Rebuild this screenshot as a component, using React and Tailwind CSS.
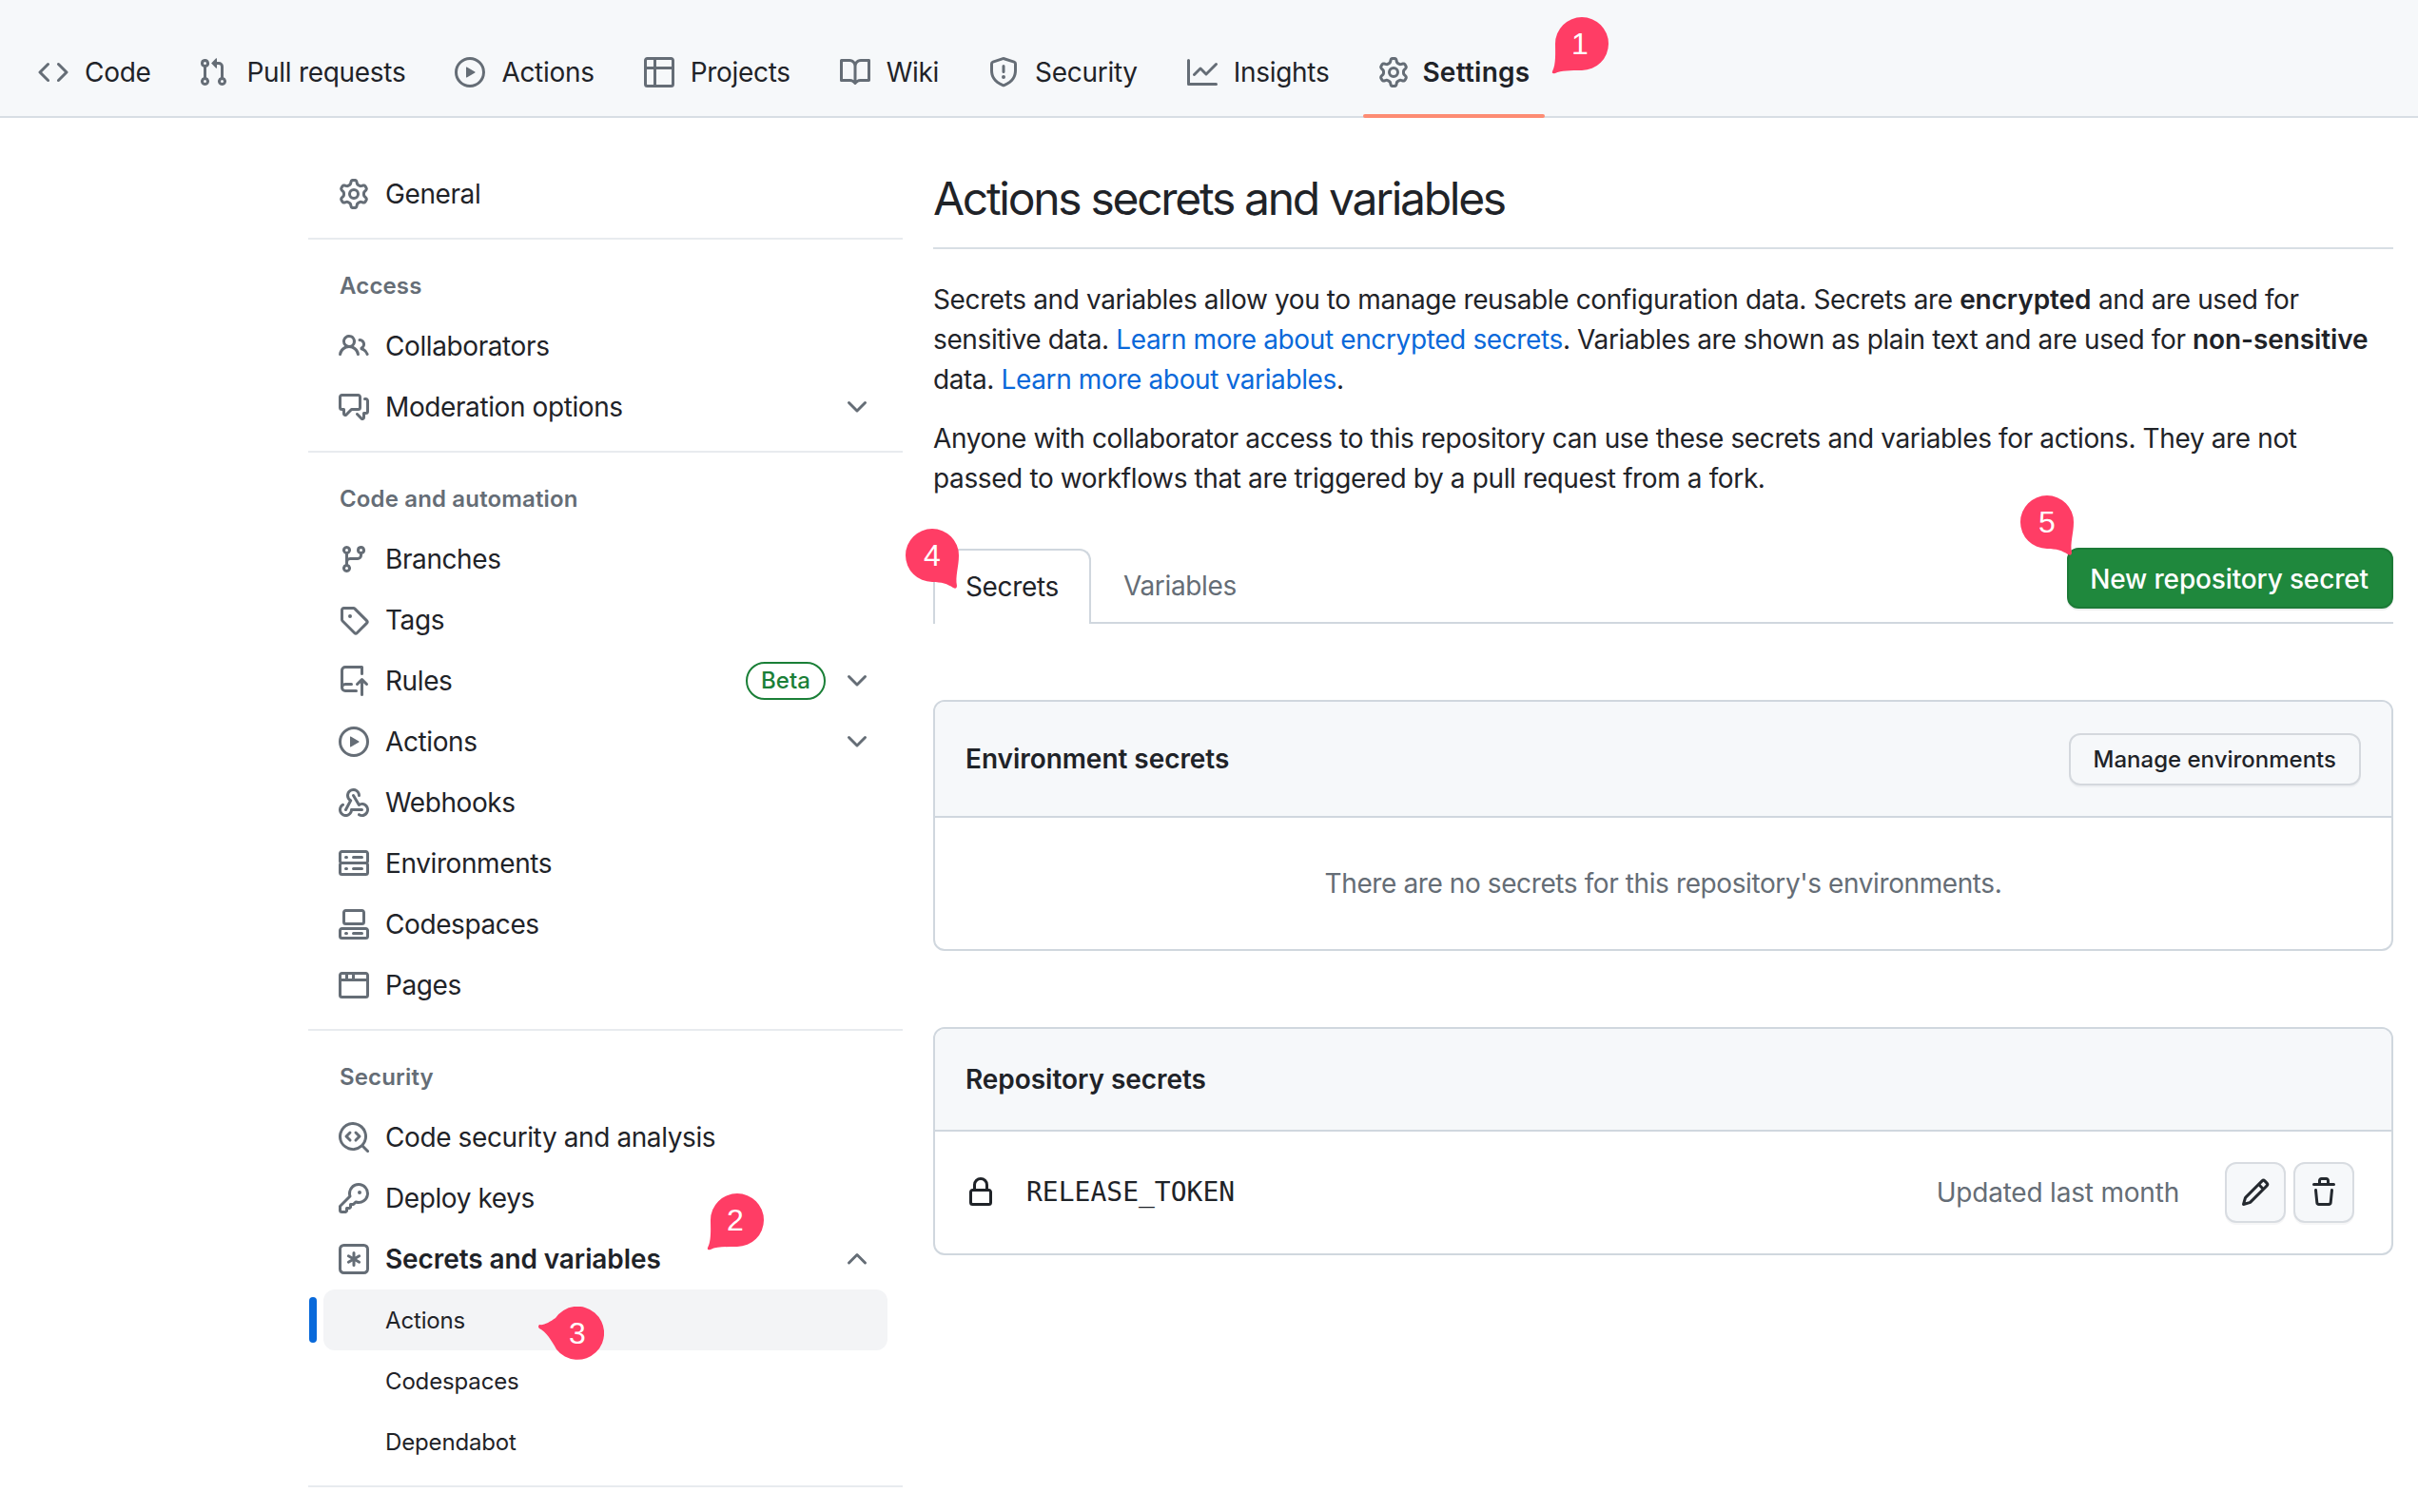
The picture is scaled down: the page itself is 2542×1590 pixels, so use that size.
const ICONS = {
  code: ['m11.28 3.22 4.25 4.25a.75.75 0 0 1 0 1.06l-4.25 4.25a.749.749 0 0 1-1.275-.326.749.749 0 0 1 .215-.734L13.94 8l-3.72-3.72a.749.749 0 0 1 .326-1.275.749.749 0 0 1 .734.215Zm-6.56 0a.751.751 0 0 1 1.042.018.751.751 0 0 1 .018 1.042L2.06 8l3.72 3.72a.749.749 0 0 1-.326 1.275.749.749 0 0 1-.734-.215L.47 8.53a.75.75 0 0 1 0-1.06Z'],
  pull: ['M1.5 3.25a2.25 2.25 0 1 1 3 2.122v5.256a2.251 2.251 0 1 1-1.5 0V5.372A2.25 2.25 0 0 1 1.5 3.25Zm5.677-.177L9.573.677A.25.25 0 0 1 10 .854V2.5h1A2.5 2.5 0 0 1 13.5 5v5.628a2.251 2.251 0 1 1-1.5 0V5a1 1 0 0 0-1-1h-1v1.646a.25.25 0 0 1-.427.177L7.177 3.427a.25.25 0 0 1 0-.354ZM3.75 2.5a.75.75 0 1 0 0 1.5.75.75 0 0 0 0-1.5Zm0 9.5a.75.75 0 1 0 0 1.5.75.75 0 0 0 0-1.5Zm8.25.75a.75.75 0 1 0 1.5 0 .75.75 0 0 0-1.5 0Z'],
  play: ['M8 0a8 8 0 1 1 0 16A8 8 0 0 1 8 0ZM1.5 8a6.5 6.5 0 1 0 13 0 6.5 6.5 0 0 0-13 0Zm4.879-2.773 4.264 2.559a.25.25 0 0 1 0 .428l-4.264 2.559A.25.25 0 0 1 6 10.559V5.442a.25.25 0 0 1 .379-.215Z'],
  table: ['M0 1.75C0 .784.784 0 1.75 0h12.5C15.216 0 16 .784 16 1.75v12.5A1.75 1.75 0 0 1 14.25 16H1.75A1.75 1.75 0 0 1 0 14.25ZM6.5 6.5v8h7.75a.25.25 0 0 0 .25-.25V6.5Zm8-1.5V1.75a.25.25 0 0 0-.25-.25H6.5V5Zm-13 1.5v7.75c0 .138.112.25.25.25H5v-8ZM5 5V1.5H1.75a.25.25 0 0 0-.25.25V5Z'],
  book: ['M0 1.75A.75.75 0 0 1 .75 1h4.253c1.227 0 2.317.59 3 1.501A3.743 3.743 0 0 1 11.006 1h4.245a.75.75 0 0 1 .75.75v10.5a.75.75 0 0 1-.75.75h-4.507a2.25 2.25 0 0 0-1.591.659l-.622.621a.75.75 0 0 1-1.06 0l-.622-.621A2.25 2.25 0 0 0 5.258 13H.75a.75.75 0 0 1-.75-.75Zm7.251 10.324.004-5.073-.002-2.253A2.25 2.25 0 0 0 5.003 2.5H1.5v9h3.757a3.75 3.75 0 0 1 1.994.574ZM8.755 4.75l-.004 7.322a3.752 3.752 0 0 1 1.992-.572H14.5v-9h-3.495a2.25 2.25 0 0 0-2.25 2.25Z'],
  shield: ['M7.467.133a1.748 1.748 0 0 1 1.066 0l5.25 1.68A1.75 1.75 0 0 1 15 3.48V7c0 1.566-.32 3.182-1.303 4.682-.983 1.498-2.585 2.813-5.032 3.855a1.697 1.697 0 0 1-1.33 0c-2.447-1.042-4.049-2.357-5.032-3.855C1.32 10.182 1 8.566 1 7V3.48a1.75 1.75 0 0 1 1.217-1.667Zm.61 1.429a.25.25 0 0 0-.153 0l-5.25 1.68a.25.25 0 0 0-.174.238V7c0 1.358.275 2.666 1.057 3.86.784 1.194 2.121 2.34 4.366 3.297a.196.196 0 0 0 .154 0c2.245-.956 3.582-2.104 4.366-3.298C13.225 9.666 13.5 8.36 13.5 7V3.48a.251.251 0 0 0-.174-.237l-5.25-1.68ZM8.75 4.75v3a.75.75 0 0 1-1.5 0v-3a.75.75 0 0 1 1.5 0ZM9 10.5a1 1 0 1 1-2 0 1 1 0 0 1 2 0Z'],
  graph: ['M1.5 1.75V13.5h13.75a.75.75 0 0 1 0 1.5H.75a.75.75 0 0 1-.75-.75V1.75a.75.75 0 0 1 1.5 0Zm14.28 2.53-5.25 5.25a.75.75 0 0 1-1.06 0L7 7.06 4.28 9.78a.751.751 0 0 1-1.042-.018.751.751 0 0 1-.018-1.042l3.25-3.25a.75.75 0 0 1 1.06 0L10 7.94l4.72-4.72a.751.751 0 0 1 1.042.018.751.751 0 0 1 .018 1.042Z'],
  gear: ['M8 0a8.2 8.2 0 0 1 .701.031C9.444.095 9.99.645 10.16 1.29l.288 1.107c.018.066.079.158.212.224.231.114.454.243.668.386.123.082.233.09.299.071l1.103-.303c.644-.176 1.392.021 1.82.63.27.385.506.792.704 1.218.315.675.111 1.422-.364 1.891l-.814.806c-.049.048-.098.147-.088.294.016.257.016.515 0 .772-.01.147.038.246.088.294l.814.806c.475.469.679 1.216.364 1.891a7.977 7.977 0 0 1-.704 1.217c-.428.61-1.176.807-1.82.63l-1.102-.302c-.067-.019-.177-.011-.3.071a5.909 5.909 0 0 1-.668.386c-.133.066-.194.158-.211.224l-.29 1.106c-.168.646-.715 1.196-1.458 1.26a8.006 8.006 0 0 1-1.402 0c-.743-.064-1.289-.614-1.458-1.26l-.289-1.106c-.018-.066-.079-.158-.212-.224a5.738 5.738 0 0 1-.668-.386c-.123-.082-.233-.09-.299-.071l-1.103.303c-.644.176-1.392-.021-1.82-.63a8.12 8.12 0 0 1-.704-1.218c-.315-.675-.111-1.422.363-1.891l.815-.806c.05-.048.098-.147.088-.294a6.214 6.214 0 0 1 0-.772c.01-.147-.038-.246-.088-.294l-.815-.806C.635 6.045.431 5.298.746 4.623a7.92 7.92 0 0 1 .704-1.217c.428-.61 1.176-.807 1.82-.63l1.102.302c.067.019.177.011.3-.071.214-.143.437-.272.668-.386.133-.066.194-.158.211-.224l.29-1.106C6.009.645 6.556.095 7.299.03 7.53.01 7.764 0 8 0Zm-.571 1.525c-.036.003-.108.036-.137.146l-.289 1.105c-.147.561-.549.967-.998 1.189-.173.086-.34.183-.5.29-.417.278-.97.423-1.529.27l-1.103-.303c-.109-.03-.175.016-.195.045-.22.312-.412.644-.573.99-.014.031-.021.11.059.19l.815.806c.411.406.562.957.53 1.456a4.709 4.709 0 0 0 0 .582c.032.499-.119 1.05-.53 1.456l-.815.806c-.081.08-.073.159-.059.19.162.346.353.677.573.989.02.03.085.076.195.046l1.102-.303c.56-.153 1.113-.008 1.53.27.161.107.328.204.501.29.447.222.85.629.997 1.189l.289 1.105c.029.109.101.143.137.146a6.6 6.6 0 0 0 1.142 0c.036-.003.108-.036.137-.146l.289-1.105c.147-.561.549-.967.998-1.189.173-.086.34-.183.5-.29.417-.278.97-.423 1.529-.27l1.103.303c.109.029.175-.016.195-.045.22-.313.411-.644.573-.99.014-.031.021-.11-.059-.19l-.815-.806c-.411-.406-.562-.957-.53-1.456a4.709 4.709 0 0 0 0-.582c-.032-.499.119-1.05.53-1.456l.815-.806c.081-.08.073-.159.059-.19a6.464 6.464 0 0 0-.573-.989c-.02-.03-.085-.076-.195-.046l-1.102.303c-.56.153-1.113.008-1.53-.27a4.44 4.44 0 0 0-.501-.29c-.447-.222-.85-.629-.997-1.189l-.289-1.105c-.029-.11-.101-.143-.137-.146a6.6 6.6 0 0 0-1.142 0ZM11 8a3 3 0 1 1-6 0 3 3 0 0 1 6 0ZM9.5 8a1.5 1.5 0 1 0-3.001.001A1.5 1.5 0 0 0 9.5 8Z'],
  people: ['M2 5.5a3.5 3.5 0 1 1 5.898 2.549 5.508 5.508 0 0 1 3.034 4.084.75.75 0 1 1-1.482.235 4 4 0 0 0-7.9 0 .75.75 0 0 1-1.482-.236A5.507 5.507 0 0 1 3.102 8.05 3.493 3.493 0 0 1 2 5.5ZM11 4a3.001 3.001 0 0 1 2.22 5.018 5.01 5.01 0 0 1 2.56 3.012.749.749 0 0 1-.885.954.752.752 0 0 1-.549-.514 3.507 3.507 0 0 0-2.522-2.372.75.75 0 0 1-.574-.73v-.352a.75.75 0 0 1 .416-.672A1.5 1.5 0 0 0 11 5.5.75.75 0 0 1 11 4Zm-5.5-.5a2 2 0 1 0-.001 3.999A2 2 0 0 0 5.5 3.5Z'],
  discussion: ['M1.75 1h8.5c.966 0 1.75.784 1.75 1.75v5.5A1.75 1.75 0 0 1 10.25 10H7.061l-2.574 2.573A1.458 1.458 0 0 1 2 11.543V10h-.25A1.75 1.75 0 0 1 0 8.25v-5.5C0 1.784.784 1 1.75 1ZM1.5 2.75v5.5c0 .138.112.25.25.25h1a.75.75 0 0 1 .75.75v2.19l2.72-2.72a.749.749 0 0 1 .53-.22h3.5a.25.25 0 0 0 .25-.25v-5.5a.25.25 0 0 0-.25-.25h-8.5a.25.25 0 0 0-.25.25Zm13 2a.25.25 0 0 0-.25-.25h-.5a.75.75 0 0 1 0-1.5h.5c.966 0 1.75.784 1.75 1.75v5.5A1.75 1.75 0 0 1 14.25 12H14v1.543a1.458 1.458 0 0 1-2.487 1.03L9.22 12.28a.749.749 0 0 1 .326-1.275.749.749 0 0 1 .734.215l2.22 2.22v-2.19a.75.75 0 0 1 .75-.75h1a.25.25 0 0 0 .25-.25Z'],
  branch: ['M9.5 3.25a2.25 2.25 0 1 1 3 2.122V6A2.5 2.5 0 0 1 10 8.5H6a1 1 0 0 0-1 1v1.128a2.251 2.251 0 1 1-1.5 0V5.372a2.25 2.25 0 1 1 1.5 0v1.836A2.493 2.493 0 0 1 6 7h4a1 1 0 0 0 1-1v-.628A2.25 2.25 0 0 1 9.5 3.25Zm-6 0a.75.75 0 1 0 1.5 0 .75.75 0 0 0-1.5 0Zm8.25-.75a.75.75 0 1 0 0 1.5.75.75 0 0 0 0-1.5ZM4.25 12a.75.75 0 1 0 0 1.5.75.75 0 0 0 0-1.5Z'],
  tag: ['M1 7.775V2.75C1 1.784 1.784 1 2.75 1h5.025c.464 0 .91.184 1.238.513l6.25 6.25a1.75 1.75 0 0 1 0 2.474l-5.026 5.026a1.75 1.75 0 0 1-2.474 0l-6.25-6.25A1.752 1.752 0 0 1 1 7.775Zm1.5 0c0 .066.026.13.073.177l6.25 6.25a.25.25 0 0 0 .354 0l5.025-5.025a.25.25 0 0 0 0-.354l-6.25-6.25a.25.25 0 0 0-.177-.073H2.75a.25.25 0 0 0-.25.25ZM6 5a1 1 0 1 1 0 2 1 1 0 0 1 0-2Z'],
  repoPush: ['M1 2.5A2.5 2.5 0 0 1 3.5 0h8.75a.75.75 0 0 1 .75.75v3.5a.75.75 0 0 1-1.5 0V1.5h-8a1 1 0 0 0-1 1v6.708A2.493 2.493 0 0 1 3.5 9h3.25a.75.75 0 0 1 0 1.5H3.5a1 1 0 0 0 0 2h5.75a.75.75 0 0 1 0 1.5H3.5A2.5 2.5 0 0 1 1 11.5Zm13.23 7.79h-.001l-1.224-1.224v6.184a.75.75 0 0 1-1.5 0V9.066L10.28 10.29a.75.75 0 0 1-1.06-1.061l2.505-2.504a.75.75 0 0 1 1.06 0L15.29 9.23a.751.751 0 0 1-.018 1.042.751.751 0 0 1-1.042.018Z'],
  webhook: [
    'M5.5 4.25a2.25 2.25 0 0 1 4.5 0 .75.75 0 0 0 1.5 0 3.75 3.75 0 1 0-6.14 2.889l-2.272 4.258a.75.75 0 0 0 1.324.706L7 7.25a.75.75 0 0 0-.309-1.015A2.25 2.25 0 0 1 5.5 4.25Z',
    'M7.364 3.607a.75.75 0 0 1 1.03.257l2.608 4.349a3.75 3.75 0 1 1-.628 6.785.75.75 0 0 1 .752-1.299 2.25 2.25 0 1 0-.033-3.88.75.75 0 0 1-1.03-.256L7.107 4.636a.75.75 0 0 1 .257-1.03Z',
    'M2.9 8.776A.75.75 0 0 1 2.625 9.8 2.25 2.25 0 1 0 6 11.75a.75.75 0 0 1 .75-.751h5.5a.75.75 0 0 1 0 1.5H7.425a3.751 3.751 0 1 1-5.55-3.998.75.75 0 0 1 1.024.274Z',
  ],
  server: ['M1.75 1h12.5c.966 0 1.75.784 1.75 1.75v4c0 .372-.116.717-.314 1 .198.283.314.628.314 1v4a1.75 1.75 0 0 1-1.75 1.75H1.75A1.75 1.75 0 0 1 0 12.75v-4c0-.358.109-.707.314-1a1.739 1.739 0 0 1-.314-1v-4C0 1.784.784 1 1.75 1ZM1.5 2.75v4c0 .138.112.25.25.25h12.5a.25.25 0 0 0 .25-.25v-4a.25.25 0 0 0-.25-.25H1.75a.25.25 0 0 0-.25.25Zm.25 5.75a.25.25 0 0 0-.25.25v4c0 .138.112.25.25.25h12.5a.25.25 0 0 0 .25-.25v-4a.25.25 0 0 0-.25-.25ZM7 4.75A.75.75 0 0 1 7.75 4h4.5a.75.75 0 0 1 0 1.5h-4.5A.75.75 0 0 1 7 4.75ZM7.75 10h4.5a.75.75 0 0 1 0 1.5h-4.5a.75.75 0 0 1 0-1.5ZM3 4.75A.75.75 0 0 1 3.75 4h.5a.75.75 0 0 1 0 1.5h-.5A.75.75 0 0 1 3 4.75ZM3.75 10h.5a.75.75 0 0 1 0 1.5h-.5a.75.75 0 0 1 0-1.5Z'],
  codespaces: [
    'M0 11.25c0-.966.784-1.75 1.75-1.75h12.5c.966 0 1.75.784 1.75 1.75v3A1.75 1.75 0 0 1 14.25 16H1.75A1.75 1.75 0 0 1 0 14.25Zm2-9.5C2 .784 2.784 0 3.75 0h8.5C13.216 0 14 .784 14 1.75v5a1.75 1.75 0 0 1-1.75 1.75h-8.5A1.75 1.75 0 0 1 2 6.75Zm1.75-.25a.25.25 0 0 0-.25.25v5c0 .138.112.25.25.25h8.5a.25.25 0 0 0 .25-.25v-5a.25.25 0 0 0-.25-.25Zm-2 9.5a.25.25 0 0 0-.25.25v3c0 .138.112.25.25.25h12.5a.25.25 0 0 0 .25-.25v-3a.25.25 0 0 0-.25-.25Z',
    'M7 12.75a.75.75 0 0 1 .75-.75h4.5a.75.75 0 0 1 0 1.5h-4.5a.75.75 0 0 1-.75-.75Zm-4 0a.75.75 0 0 1 .75-.75h.5a.75.75 0 0 1 0 1.5h-.5a.75.75 0 0 1-.75-.75Z',
  ],
  browser: ['M0 2.75C0 1.784.784 1 1.75 1h12.5c.966 0 1.75.784 1.75 1.75v10.5A1.75 1.75 0 0 1 14.25 15H1.75A1.75 1.75 0 0 1 0 13.25ZM14.5 6h-13v7.25c0 .138.112.25.25.25h12.5a.25.25 0 0 0 .25-.25Zm-6-3.5v2h6V2.75a.25.25 0 0 0-.25-.25ZM5 2.5v2h2v-2Zm-3.25 0a.25.25 0 0 0-.25.25V4.5h2v-2Z'],
  codescan: [
    'M8.47 4.97a.75.75 0 0 0 0 1.06L9.94 7.5 8.47 8.97a.75.75 0 1 0 1.06 1.06l2-2a.75.75 0 0 0 0-1.06l-2-2a.75.75 0 0 0-1.06 0ZM6.53 6.03a.75.75 0 0 0-1.06-1.06l-2 2a.75.75 0 0 0 0 1.06l2 2a.75.75 0 1 0 1.06-1.06L5.06 7.5l1.47-1.47Z',
    'M12.246 13.307a7.501 7.501 0 1 1 1.06-1.06l2.474 2.473a.749.749 0 0 1-.326 1.275.749.749 0 0 1-.734-.215ZM1.5 7.5a6.002 6.002 0 0 0 3.608 5.504 6.002 6.002 0 0 0 6.486-1.117.748.748 0 0 1 .292-.293A6 6 0 1 0 1.5 7.5Z',
  ],
  key: ['M10.5 0a5.499 5.499 0 1 1-1.288 10.848l-.932.932a.749.749 0 0 1-.53.22H7v.75a.749.749 0 0 1-.22.53l-.5.5a.749.749 0 0 1-.53.22H5v.75a.749.749 0 0 1-.22.53l-.5.5a.749.749 0 0 1-.53.22h-2A1.75 1.75 0 0 1 0 14.25v-2c0-.199.079-.389.22-.53l4.932-4.932A5.5 5.5 0 0 1 10.5 0Zm-4 5.5c-.001.431.069.86.205 1.269a.75.75 0 0 1-.181.768L1.5 12.56v1.69c0 .138.112.25.25.25h1.69l.06-.06v-1.19a.75.75 0 0 1 .75-.75h1.19l.06-.06v-1.19a.75.75 0 0 1 .75-.75h1.19l1.023-1.025a.75.75 0 0 1 .768-.18A4 4 0 1 0 6.5 5.5ZM11 6a1 1 0 1 1 0-2 1 1 0 0 1 0 2Z'],
  asterisk: [
    'M0 2.75A2.75 2.75 0 0 1 2.75 0h10.5A2.75 2.75 0 0 1 16 2.75v10.5A2.75 2.75 0 0 1 13.25 16H2.75A2.75 2.75 0 0 1 0 13.25ZM2.75 1.5c-.69 0-1.25.56-1.25 1.25v10.5c0 .69.56 1.25 1.25 1.25h10.5c.69 0 1.25-.56 1.25-1.25V2.75c0-.69-.56-1.25-1.25-1.25Z',
    'M8 4a.75.75 0 0 1 .75.75V6.7l1.69-.975a.75.75 0 0 1 .75 1.3L9.5 8l1.69.976a.75.75 0 0 1-.75 1.298L8.75 9.3v1.951a.75.75 0 0 1-1.5 0V9.299l-1.69.975a.75.75 0 0 1-.75-1.298L6.5 8l-1.69-.975a.75.75 0 0 1 .75-1.3l1.69.976V4.75A.75.75 0 0 1 8 4Z',
  ],
  chevronDown: ['M12.78 5.22a.749.749 0 0 1 0 1.06l-4.25 4.25a.749.749 0 0 1-1.06 0L3.22 6.28a.749.749 0 1 1 1.06-1.06L8 8.939l3.72-3.719a.749.749 0 0 1 1.06 0Z'],
  chevronUp: ['M3.22 10.53a.749.749 0 0 1 0-1.06l4.25-4.25a.749.749 0 0 1 1.06 0l4.25 4.25a.749.749 0 1 1-1.06 1.06L8 6.811 4.28 10.53a.749.749 0 0 1-1.06 0Z'],
  lock: ['M4 4a4 4 0 0 1 8 0v2h.25c.966 0 1.75.784 1.75 1.75v5.5A1.75 1.75 0 0 1 12.25 15h-8.5A1.75 1.75 0 0 1 2 13.25v-5.5C2 6.784 2.784 6 3.75 6H4Zm8.25 3.5h-8.5a.25.25 0 0 0-.25.25v5.5c0 .138.112.25.25.25h8.5a.25.25 0 0 0 .25-.25v-5.5a.25.25 0 0 0-.25-.25ZM10.5 6V4a2.5 2.5 0 1 0-5 0v2Z'],
  pencil: ['M11.013 1.427a1.75 1.75 0 0 1 2.474 0l1.086 1.086a1.75 1.75 0 0 1 0 2.474l-8.61 8.61c-.21.21-.47.364-.756.445l-3.251.93a.75.75 0 0 1-.927-.928l.929-3.25c.081-.286.235-.547.445-.758l8.61-8.61Zm.176 4.823L9.75 4.81l-6.286 6.287a.253.253 0 0 0-.064.108l-.558 1.953 1.953-.558a.253.253 0 0 0 .108-.064Zm1.238-3.763a.25.25 0 0 0-.354 0L10.811 3.75l1.439 1.44 1.263-1.263a.25.25 0 0 0 0-.354Z'],
  trash: ['M11 1.75V3h2.25a.75.75 0 0 1 0 1.5H2.75a.75.75 0 0 1 0-1.5H5V1.75C5 .784 5.784 0 6.75 0h2.5C10.216 0 11 .784 11 1.75ZM4.496 6.675l.66 6.6a.25.25 0 0 0 .249.225h5.19a.25.25 0 0 0 .249-.225l.66-6.6a.75.75 0 0 1 1.492.149l-.66 6.6A1.748 1.748 0 0 1 10.595 15h-5.19a1.75 1.75 0 0 1-1.741-1.575l-.66-6.6a.75.75 0 1 1 1.492-.15ZM6.5 1.75V3h3V1.75a.25.25 0 0 0-.25-.25h-2.5a.25.25 0 0 0-.25.25Z'],
};

function Icon({ name, className = 'text-[#656d76]' }) {
  return (
    <svg viewBox="0 0 16 16" fill="currentColor" className={`h-8 w-8 shrink-0 ${className}`}>
      {ICONS[name].map((d) => (
        <path key={d} d={d} />
      ))}
    </svg>
  );
}

const TABS = [
  ['code', 'Code'],
  ['pull', 'Pull requests'],
  ['play', 'Actions'],
  ['table', 'Projects'],
  ['book', 'Wiki'],
  ['shield', 'Security'],
  ['graph', 'Insights'],
  ['gear', 'Settings'],
];

function TopNav() {
  return (
    <nav className="flex h-[124px] items-stretch gap-5 border-b-2 border-[#d8dee4] bg-[#f6f8fa] pl-6 tracking-[-0.3px]">
      {TABS.map(([icon, label]) => {
        const active = label === 'Settings';
        const pull = label === 'Pull requests';
        return (
          <a key={label} className={`relative flex items-center px-4 pt-[30px] ${active ? 'gap-[14px]' : pull ? '-ml-[3px] gap-5' : 'gap-[17px]'}`}>
            <Icon name={icon} />
            <span className={active ? 'font-semibold tracking-[0.25px]' : ''}>{label}</span>
            {active && <span className="absolute inset-x-0 -bottom-[2px] h-1 rounded-[2px] bg-[#fd8c73]" />}
          </a>
        );
      })}
    </nav>
  );
}

function Divider() {
  return <div className="my-[14px] h-[2px] bg-[#e8ebef]" />;
}

function SectionLabel({ children }) {
  return <div className="-mt-[14px] ml-[33px] pb-[11px] pt-[29px] text-2xl/10 font-semibold tracking-[0.15px] text-[#656d76]">{children}</div>;
}

function Row({ icon, label, bold, open, beta, hasMenu }) {
  return (
    <div className="mx-4 flex h-16 items-center gap-4 pl-4 pr-4">
      <Icon name={icon} />
      <span className={`ml-px flex-1 ${bold ? 'font-semibold tracking-[-0.1px]' : 'tracking-[-0.4px]'}`}>{label}</span>
      {beta && (
        <span className="mr-px flex h-10 w-[84px] items-center justify-center rounded-full border-2 border-[#1a7f37] text-2xl font-medium text-[#1a7f37]">
          Beta
        </span>
      )}
      {hasMenu && <Icon name={open ? 'chevronUp' : 'chevronDown'} />}
    </div>
  );
}

function SubRow({ label, active }) {
  return (
    <div className={`relative mx-4 flex h-16 items-center rounded-xl pl-[65px] pt-[2px] text-2xl tracking-[-0.15px] ${active ? 'bg-[#f3f4f6]' : ''}`}>
      {active && <span className="absolute -left-[15px] top-2 h-12 w-2 rounded-full bg-[#0969da]" />}
      {label}
    </div>
  );
}

function Sidebar() {
  return (
    <aside className="w-[625px] shrink-0 pt-12">
      <Row icon="gear" label="General" />
      <Divider />
      <SectionLabel>Access</SectionLabel>
      <Row icon="people" label="Collaborators" />
      <Row icon="discussion" label="Moderation options" hasMenu />
      <Divider />
      <SectionLabel>Code and automation</SectionLabel>
      <Row icon="branch" label="Branches" />
      <Row icon="tag" label="Tags" />
      <Row icon="repoPush" label="Rules" beta hasMenu />
      <Row icon="play" label="Actions" hasMenu />
      <Row icon="webhook" label="Webhooks" />
      <Row icon="server" label="Environments" />
      <Row icon="codespaces" label="Codespaces" />
      <Row icon="browser" label="Pages" />
      <Divider />
      <SectionLabel>Security</SectionLabel>
      <Row icon="codescan" label="Code security and analysis" />
      <Row icon="key" label="Deploy keys" />
      <Row icon="asterisk" label="Secrets and variables" bold open hasMenu />
      <SubRow label="Actions" active />
      <SubRow label="Codespaces" />
      <SubRow label="Dependabot" />
      <Divider />
    </aside>
  );
}

function Link({ children }) {
  return <a className="text-[#0969da]">{children}</a>;
}

function Strong({ children }) {
  return <b className="font-semibold tracking-[-0.1px]">{children}</b>;
}

function BoxHeader({ title, tall, children }) {
  return (
    <div className={`flex items-center justify-between rounded-t-[10px] border-b-2 border-[#d0d7de] bg-[#f6f8fa] px-8 ${tall ? 'h-[122px]' : 'h-[108px]'}`}>
      <h3 className="font-semibold tracking-[-0.05px]">{title}</h3>
      {children}
    </div>
  );
}

function IconButton({ name }) {
  return (
    <button className="flex h-16 w-16 items-center justify-center rounded-xl border-2 border-[#d8dce1] bg-[#f6f8fa] shadow-[0_2px_0_rgba(31,35,40,0.04)]">
      <Icon name={name} className="text-[#24292f]" />
    </button>
  );
}

function Main() {
  return (
    <main className="ml-8 w-[1535px] shrink-0">
      <div className="border-b-2 border-[#d8dee4] pb-[15px] pt-[49px]">
        <h1 className="text-5xl/[72px] tracking-[-2.3px]">Actions secrets and variables</h1>
      </div>
      <p className="mt-8 tracking-[-0.38px]">
        Secrets and variables allow you to manage reusable configuration data. Secrets are <Strong>encrypted</Strong> and are used for
        <br />
        sensitive data. <Link>Learn more about encrypted secrets</Link>. Variables are shown as plain text and are used for <Strong>non-sensitive</Strong>
        <br />
        data. <Link>Learn more about variables</Link>.
      </p>
      <p className="mt-5 tracking-[-0.38px]">
        Anyone with collaborator access to this repository can use these secrets and variables for actions. They are not
        <br />
        passed to workflows that are triggered by a pull request from a fork.
      </p>

      <div className="mt-[52px] flex items-end border-b-2 border-[#d0d7de]">
        <a className="-mb-[2px] flex h-[79px] items-center rounded-t-xl border-2 border-b-0 border-[#d0d7de] bg-white px-8 pb-[2px] tracking-[-0.35px]">Secrets</a>
        <a className="flex h-[78px] items-center border-2 border-transparent px-8 pt-[2px] tracking-[-0.35px] text-[#656d76]">Variables</a>
        <button className="mb-[14px] ml-auto h-16 rounded-xl border-2 border-[#1c7a37] bg-[#1f883d] pl-[22px] pr-6 pt-[2px] font-medium tracking-[-0.15px] text-white shadow-[0_2px_0_rgba(31,35,40,0.08)]">
          New repository secret
        </button>
      </div>

      <section className="mt-20 rounded-xl border-2 border-[#d0d7de]">
        <BoxHeader title="Environment secrets" tall>
          <button className="h-[55px] rounded-xl border-2 border-[#d4d8dd] bg-[#f6f8fa] px-6 pt-px text-2xl font-medium shadow-[0_2px_0_rgba(31,35,40,0.04)]">
            Manage environments
          </button>
        </BoxHeader>
        <div className="flex h-[138px] items-center justify-center tracking-[-0.4px] text-[#656d76]">There are no secrets for this repository's environments.</div>
      </section>

      <section className="mt-20 rounded-xl border-2 border-[#d0d7de]">
        <BoxHeader title="Repository secrets" />
        <div className="flex h-[128px] items-center pl-8 pr-[39px]">
          <Icon name="lock" className="text-[#1f2328]" />
          <span className="ml-8 font-['DejaVu_Sans_Mono',monospace] text-[28px]">RELEASE_TOKEN</span>
          <span className="ml-auto mr-[48px] tracking-[-0.2px] text-[#656d76]">Updated last month</span>
          <div className="flex gap-2">
            <IconButton name="pencil" />
            <IconButton name="trash" />
          </div>
        </div>
      </section>
    </main>
  );
}

// callout numbers laid over the page
function Bubble({ n, tail, className }) {
  return (
    <div className={`absolute ${className}`}>
      {tail === 'bl' && (
        <svg viewBox="0 0 60 60" className="h-[60px] w-[60px] fill-[#ff3d65]">
          <path d="M1 57 C5 50 4 36 4 28 A28 28 0 1 1 32 56 C20 56 10 56 4 59 Q0 60 1 57Z" />
        </svg>
      )}
      {tail === 'br' && (
        <svg viewBox="0 0 56 64" className="h-16 w-14 fill-[#ff3d65]">
          <path d="M56 28 C56 40 52 50 54 60 Q54 64 50 62 C44 58 38 56 28 56 A28 28 0 1 1 56 28Z" />
        </svg>
      )}
      {tail === 'l' && (
        <svg viewBox="0 0 69 56" className="h-14 w-[69px] fill-[#ff3d65]">
          <path d="M1 19 C6 20 12 16 18 12 A28 28 0 1 1 19 45 C14 36 8 26 1 23 Q-1 21 1 19Z" />
        </svg>
      )}
      <span
        className={`absolute top-0 flex h-14 w-14 items-center justify-center font-['Liberation_Sans',sans-serif] text-[32px] text-white ${
          tail === 'bl' ? 'left-[2px]' : tail === 'l' ? 'left-[13px]' : 'left-0'
        }`}
      >
        {n}
      </span>
    </div>
  );
}

export default function App() {
  return (
    <div className="relative min-h-[1590px] overflow-hidden bg-white font-['Inter',sans-serif] text-[28px]/[42px] text-[#1f2328]">
      <TopNav />
      <div className="flex pl-[324px]">
        <Sidebar />
        <Main />
      </div>
      <Bubble n="1" tail="bl" className="left-[1631px] top-[18px]" />
      <Bubble n="2" tail="bl" className="left-[743px] top-[1255px]" />
      <Bubble n="3" tail="l" className="left-[566px] top-[1374px]" />
      <Bubble n="4" tail="br" className="left-[952px] top-[556px]" />
      <Bubble n="5" tail="br" className="left-[2124px] top-[521px]" />
    </div>
  );
}
